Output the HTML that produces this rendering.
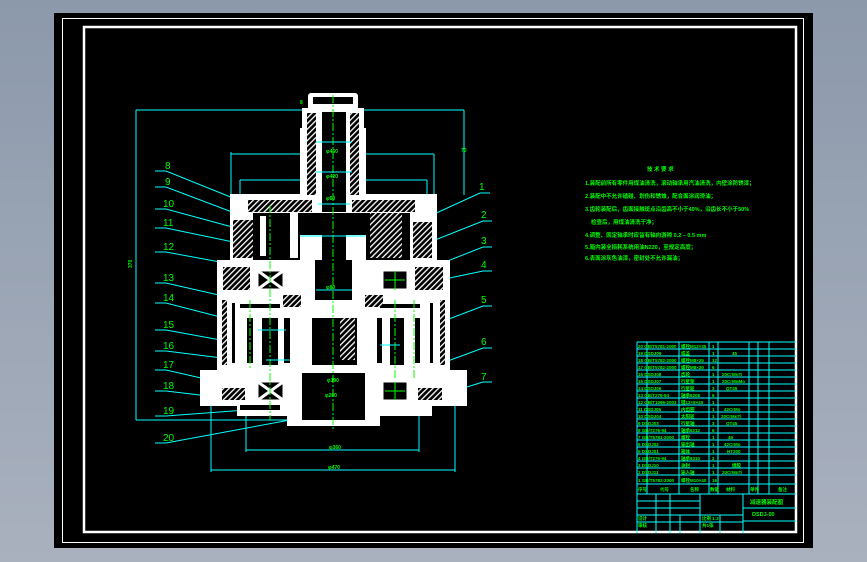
<!DOCTYPE html>
<html><head><meta charset="utf-8"><style>
html,body{margin:0;padding:0;width:867px;height:562px;overflow:hidden;background:linear-gradient(#8c99ab,#a9b1be);}
svg{position:absolute;left:0;top:0}
text{font-family:"Liberation Sans","Noto Sans CJK SC",sans-serif;fill:#00ff00}
</style></head><body>
<svg width="867" height="562" viewBox="0 0 867 562">
<defs>
<pattern id="h" width="4" height="4" patternUnits="userSpaceOnUse" patternTransform="rotate(45)">
<rect width="4" height="4" fill="#000"/><rect width="1.3" height="4" fill="#fff"/></pattern>
</defs>
<rect x="54" y="13" width="759" height="535" fill="#000"/>
<rect x="62.5" y="18.5" width="741" height="524" fill="none" stroke="#fff" stroke-width="1"/>
<rect x="84" y="27" width="712" height="505" fill="none" stroke="#fff" stroke-width="2.5"/>

<g stroke="#00ffff" stroke-width="1" fill="none">
<path d="M136 110H302M364 110H464M136 110V420M464 110V195M136 420H300"/>
<path d="M231 154H434M231 152V195M434 154V195M240 180H427M240 180V195M427 180V195"/>
<path d="M246 450H419M246 405V452M419 405V452M211 470H455M211 400V472M455 400V472"/>
<path d="M288 378H370M283 392H380"/>
<path d="M155 171H166L238 200M155 187H166L240 215M155 209H166L236 228M155 228H166L238 243M155 252H166L220 262M155 283H166L223 296M155 303H166L232 320M155 330H166L248 345M155 351H166L222 358M155 370H166L210 380M155 391H166L225 398M155 416H166L246 410M155 443H166L290 420"/>
<path d="M490 193H480L432 215M492 221H483L435 240M492 247H483L445 262M492 271H483L440 280M492 306H483L420 330M492 348H483L445 362M492 382H483L405 406"/>
</g>

<g fill="#fff">
<rect x="308" y="93" width="50" height="17" rx="3"/>
<rect x="302" y="108" width="62" height="22"/>
<rect x="300" y="128" width="66" height="70"/>
<rect x="230" y="194" width="207" height="68"/>
<rect x="217" y="260" width="233" height="112"/>
<rect x="200" y="370" width="267" height="36"/>
<rect x="237" y="404" width="195" height="12"/>
<rect x="287" y="404" width="93" height="22"/>
</g>
<g fill="#000">
<rect x="313" y="97" width="40" height="7"/>
<rect x="322" y="112" width="24" height="100"/>
<rect x="253" y="213" width="157" height="47"/>
<rect x="315" y="258" width="37" height="42"/>
<rect x="312" y="318" width="45" height="47"/>
<rect x="247" y="318" width="6" height="45"/><rect x="262" y="318" width="16" height="47"/><rect x="284" y="318" width="6" height="45"/>
<rect x="377" y="318" width="5" height="45"/><rect x="390" y="318" width="14" height="47"/><rect x="415" y="318" width="5" height="45"/>
<rect x="232" y="303" width="3" height="60"/><rect x="430" y="303" width="3" height="60"/>
<rect x="240" y="304" width="40" height="4"/><rect x="380" y="304" width="40" height="4"/>
<rect x="302" y="373" width="63" height="47"/>
<rect x="240" y="405" width="40" height="5"/>
</g>
<g fill="#fff">
<rect x="260" y="216" width="6" height="40"/><rect x="290" y="213" width="8" height="45"/>
<rect x="300" y="235" width="22" height="25"/><rect x="346" y="235" width="20" height="25"/>
</g>
<g fill="url(#h)">
<rect x="307" y="113" width="9" height="82"/><rect x="350" y="113" width="9" height="82"/>
<rect x="248" y="200" width="64" height="12"/><rect x="352" y="200" width="63" height="12"/>
<rect x="370" y="213" width="32" height="45"/>
<rect x="233" y="220" width="20" height="38"/><rect x="413" y="222" width="19" height="36"/>
<rect x="223" y="267" width="27" height="23"/><rect x="415" y="267" width="28" height="23"/>
<rect x="283" y="295" width="18" height="12"/><rect x="365" y="295" width="18" height="12"/>
<rect x="340" y="318" width="15" height="42"/>
<rect x="222" y="388" width="23" height="12"/><rect x="418" y="388" width="24" height="12"/>
<rect x="222" y="300" width="5" height="65"/><rect x="440" y="300" width="5" height="65"/>
</g>
<g stroke="#fff" stroke-width="3" fill="#000">
<rect x="257" y="270" width="27" height="20"/><rect x="382" y="270" width="26" height="20"/>
<rect x="257" y="381" width="27" height="20"/><rect x="382" y="381" width="26" height="20"/>
</g>
<g stroke="#fff" stroke-width="3"><path d="M258 271L283 289M283 271L258 289M258 382L283 400M283 382L258 400"/></g>
<g stroke="#00ff00" stroke-width="1"><path d="M385 280H405M395 271V290M385 391H405M395 382V400"/></g>
<g stroke="#00ff00" stroke-width="1" stroke-dasharray="8 2 2 2"><path d="M333 95V430M270 205V420M395 300V380M414 300V380M250 300V370"/></g>
<g stroke="#00ffff" stroke-width="1"><path d="M316 142H352M316 172H352M318 204H350M300 236H366M316 290H352M258 330H286M266 360H290M380 345H400"/></g>

<g font-size="10">
<text x="165" y="169">8</text><text x="165" y="185">9</text><text x="163" y="207">10</text><text x="163" y="226">11</text><text x="163" y="250">12</text>
<text x="163" y="281">13</text><text x="163" y="301">14</text><text x="163" y="328">15</text><text x="163" y="349">16</text><text x="163" y="368">17</text>
<text x="163" y="389">18</text><text x="163" y="414">19</text><text x="163" y="441">20</text>
<text x="479" y="190">1</text><text x="481" y="218">2</text><text x="481" y="244">3</text><text x="481" y="268">4</text><text x="481" y="303">5</text><text x="481" y="345">6</text><text x="481" y="380">7</text>
</g>
<g font-size="5" font-weight="bold">
<text x="326" y="153">φ460</text><text x="326" y="178">φ420</text><text x="326" y="200">φ60</text><text x="326" y="289">φ80</text>
<text x="327" y="382">φ190</text><text x="325" y="397">φ200</text><text x="329" y="449">φ360</text><text x="328" y="469">φ470</text>
<text x="132" y="268" transform="rotate(-90 132 268)">370</text><text x="461" y="152">70</text><text x="300" y="104">8</text>
</g>

<g font-size="5.5" font-weight="bold">
<text x="647" y="171">技 术 要 求</text>
<text x="585" y="185">1.装配前所有零件用煤油清洗，滚动轴承用汽油清洗，内壁涂防锈漆；</text>
<text x="585" y="198">2.装配中不允许磕碰、划伤和锈蚀，配合面涂润滑油；</text>
<text x="585" y="211">3.齿轮装配后，齿面接触斑点沿齿高不小于40%，沿齿长不小于50%</text>
<text x="591" y="224">检查后，用煤油清洗干净；</text>
<text x="585" y="237">4.调整、固定轴承时应留有轴向游隙 0.2 – 0.5 mm</text>
<text x="585" y="249">5.箱内装全损耗系统用油N220，至规定高度；</text>
<text x="585" y="260">6.表面涂灰色油漆，密封处不允许漏油；</text>
</g>

<g stroke="#00ffff" stroke-width="1" fill="none">
<path d="M637 342H796M637 349H796M637 356H796M637 363H796M637 370H796M637 377H796M637 384H796M637 391H796M637 398H796M637 405H796M637 412H796M637 419H796M637 426H796M637 433H796M637 440H796M637 447H796M637 454H796M637 461H796M637 468H796M637 475H796M637 484H796M637 494H796"/>
<path d="M637 342V533M647 342V494M679 342V494M709 342V494M718 342V494M749 342V494M758 342V494M769 342V494"/>
<path d="M743 494V533M743 508H796M743 521H796M637 501H700M637 508H700M637 515H743M637 522H743M656 494V533M670 494V533M700 494V533M680 515V533M720 515V533"/>
</g>
<g font-size="4.5" font-weight="bold">
<text x="638" y="348">20 GB/T5781-2000</text><text x="681" y="348">螺栓M12×35</text><text x="712" y="348">1</text>
<text x="638" y="355">19 DSDJ09</text><text x="681" y="355">端盖</text><text x="712" y="355">1</text><text x="732" y="355">45</text>
<text x="638" y="362">18 GB/T5782-2000</text><text x="681" y="362">螺栓M8×25</text><text x="712" y="362">12</text>
<text x="638" y="369">17 GB/T5782-2000</text><text x="681" y="369">螺栓M8×30</text><text x="712" y="369">6</text>
<text x="638" y="376">16 DSDJ08</text><text x="681" y="376">齿轮</text><text x="712" y="376">1</text><text x="722" y="376">20CrMnTi</text>
<text x="638" y="383">15 DSDJ07</text><text x="681" y="383">行星架</text><text x="712" y="383">1</text><text x="722" y="383">20CrMnMo</text>
<text x="638" y="390">14 DSDJ06</text><text x="681" y="390">行星轮</text><text x="712" y="390">3</text><text x="726" y="390">QT45</text>
<text x="638" y="397">13 GB/T276-94</text><text x="681" y="397">轴承6208</text><text x="712" y="397">6</text>
<text x="638" y="404">12 GB/T1096-2003</text><text x="681" y="404">键12×8×40</text><text x="712" y="404">1</text>
<text x="638" y="411">11 DSDJ05</text><text x="681" y="411">内齿圈</text><text x="712" y="411">1</text><text x="724" y="411">42CrMo</text>
<text x="638" y="418">10 DSDJ04</text><text x="681" y="418">太阳轮</text><text x="712" y="418">1</text><text x="721" y="418">20CrMnTi</text>
<text x="638" y="425">9 DSDJ03</text><text x="681" y="425">行星轴</text><text x="712" y="425">3</text><text x="726" y="425">QT45</text>
<text x="638" y="432">8 GB/T276-94</text><text x="681" y="432">轴承6212</text><text x="712" y="432">6</text>
<text x="638" y="439">7 GB/T5781-2000</text><text x="681" y="439">螺栓</text><text x="712" y="439">1</text><text x="728" y="439">45</text>
<text x="638" y="446">6 DSDJ02</text><text x="681" y="446">输出轴</text><text x="712" y="446">1</text><text x="724" y="446">42CrMo</text>
<text x="638" y="453">5 DSDJ01</text><text x="681" y="453">箱体</text><text x="712" y="453">1</text><text x="727" y="453">HT200</text>
<text x="638" y="460">4 GB/T276-94</text><text x="681" y="460">轴承6310</text><text x="712" y="460">2</text>
<text x="638" y="467">3 DSDJ10</text><text x="681" y="467">油封</text><text x="712" y="467">1</text><text x="732" y="467">橡胶</text>
<text x="638" y="474">2 DSDJ11</text><text x="681" y="474">输入轴</text><text x="712" y="474">1</text><text x="722" y="474">20CrMnTi</text>
<text x="638" y="482">1 GB/T5782-2000</text><text x="681" y="482">螺栓M10×40</text><text x="712" y="482">16</text>
<text x="638" y="491">序号</text><text x="660" y="491">代号</text><text x="690" y="491">名称</text><text x="710" y="491">数量</text><text x="726" y="491">材料</text><text x="750" y="491">单件</text><text x="778" y="491">备注</text>
<text x="750" y="504" font-size="5.5">减速器装配图</text><text x="752" y="516" font-size="5.5">DSDJ-00</text>
<text x="638" y="520">设计</text><text x="638" y="527">审核</text><text x="702" y="520">比例 1:2</text><text x="702" y="527">共1张</text>
</g>
</svg>
</body></html>
